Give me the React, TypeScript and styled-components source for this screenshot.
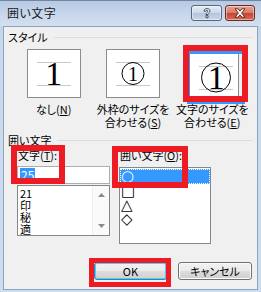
import React from "react";
import styled, { createGlobalStyle } from "styled-components";

const Global = createGlobalStyle`
  html, body { margin: 0; padding: 0; background: #ffffff; }
  body {
    font-family: "Noto Sans CJK JP", "Noto Sans", sans-serif;
    font-size: 11px;
    font-feature-settings: "palt";
  }
  * { box-sizing: border-box; }
`;

const Window = styled.div`
  position: relative;
  width: 261px;
  height: 292px;
  display: flex;
  flex-direction: column;
  background: linear-gradient(#bccde3, #c9d8ec 40px, #cddcee);
  border-top: 1px solid #6f86a5;
  overflow: hidden;
`;

const TitleBar = styled.div`
  height: 25px;
  display: flex;
  align-items: flex-start;
  padding: 4px 6px 0 7px;
  background: linear-gradient(#b7c9e2, #c6d6eb 12px, #d3e0f0);
`;

const Title = styled.div`
  flex: 1;
  line-height: 16px;
  font-size: 12px;
  color: #1a1a1a;
  letter-spacing: 0.5px;
`;

const CaptionButton = styled.div<{ $kind: "help" | "close" }>`
  height: 16px;
  width: ${(p) => (p.$kind === "help" ? 31 : 30)}px;
  margin-left: ${(p) => (p.$kind === "help" ? 0 : 3)}px;
  border: 1px solid ${(p) => (p.$kind === "help" ? "#55667f" : "#6e2a22")};
  border-radius: 3px;
  display: flex;
  align-items: center;
  justify-content: center;
  background: ${(p) =>
    p.$kind === "help"
      ? "linear-gradient(#e4ecf6, #cbd8e8 50%, #b3c4da 51%, #c9d7e9)"
      : "linear-gradient(#e7a394, #d57968 50%, #c4452f 51%, #d26b55)"};
  box-shadow: inset 0 0 0 1px rgba(255, 255, 255, 0.45);
`;

const Client = styled.div`
  flex: 1;
  margin: 0 3px 2px 3px;
  border: 1px solid #8ea3bd;
  background: #f0f0f0;
  display: flex;
  flex-direction: column;
  padding: 0 5px 9px 4px;
`;

const GroupHeader = styled.div<{ $top: number }>`
  display: flex;
  align-items: center;
  margin-top: ${(p) => p.$top}px;
  height: 12px;
  line-height: 12px;
  color: #000;
`;

const GroupLine = styled.div`
  flex: 1;
  height: 1px;
  margin-left: 6px;
  background: #d5dfe5;
`;

const StyleRow = styled.div`
  display: flex;
  align-items: flex-start;
  padding-left: 6px;
  margin-top: 6px;
`;

const StyleOption = styled.div`
  width: 80px;
  display: flex;
  flex-direction: column;
  align-items: center;
`;

const PreviewBox = styled.div<{ $selected?: boolean }>`
  width: 54px;
  height: 49px;
  border: 1px solid #8c8c8c;
  background: #fff;
  display: grid;
  place-items: center;
  padding: ${(p) => (p.$selected ? "1px" : "0")};
`;

const PreviewInner = styled.div<{ $selected?: boolean }>`
  grid-area: 1 / 1;
  width: 100%;
  height: 100%;
  display: grid;
  place-items: center;
  border: ${(p) => (p.$selected ? "3px solid #3399ff" : "0")};
`;

const Layer = styled.div`
  grid-area: 1 / 1;
  display: grid;
  place-items: center;
`;

const Digit = styled.span<{ $size: number }>`
  grid-area: 1 / 1;
  font-family: "Liberation Serif", "Times New Roman", serif;
  font-size: ${(p) => p.$size}px;
  line-height: 1;
  color: #000;
`;

const OptionLabel = styled.div`
  margin-top: 5px;
  text-align: center;
  line-height: 13px;
  white-space: nowrap;
  color: #000;
`;

const Key = styled.span`
  text-decoration: underline;
`;

const Columns = styled.div`
  display: flex;
  align-items: flex-start;
  gap: 9px;
  margin-top: 3px;
`;

const LeftCol = styled.div`
  width: 102px;
  padding-left: 9px;
  display: flex;
  flex-direction: column;
`;

const RightCol = styled.div`
  width: 92px;
  display: flex;
  flex-direction: column;
`;

const FieldLabel = styled.div`
  line-height: 13px;
  height: 13px;
  padding-left: 1px;
  white-space: nowrap;
  color: #000;
`;

const TextInput = styled.div`
  margin-top: 4px;
  height: 18px;
  border: 1px solid #abadb3;
  background: #fff;
  display: flex;
  align-items: center;
  padding-left: 2px;
`;

const Selected = styled.span`
  background: #3399ff;
  color: #fff;
  line-height: 14px;
  padding: 0 1px;
  font-size: 12px;
`;

const ListBox = styled.div<{ $height: number; $top: number }>`
  margin-top: ${(p) => p.$top}px;
  height: ${(p) => p.$height}px;
  border: 1px solid #828790;
  background: #fff;
  display: flex;
`;

const ListItems = styled.div`
  flex: 1;
  display: flex;
  flex-direction: column;
  padding-top: 1px;
`;

const ListItem = styled.div<{ $selected?: boolean; $h: number; $size: number; $symbol?: boolean }>`
  height: ${(p) => p.$h}px;
  line-height: ${(p) => p.$h}px;
  padding-left: ${(p) => (p.$symbol ? 1 : 2)}px;
  color: ${(p) => (p.$selected ? "#fff" : "#000")};
  background: ${(p) => (p.$selected ? "#3399ff" : "transparent")};
  outline: ${(p) => (p.$selected ? "1px dotted #fff" : "none")};
  outline-offset: -1px;
  font-size: ${(p) => p.$size}px;
  font-family: ${(p) =>
    p.$symbol ? '"DejaVu Sans", sans-serif' : '"Noto Sans CJK JP", sans-serif'};
  font-feature-settings: normal;
`;

const ScrollBar = styled.div`
  width: 17px;
  border-left: 1px solid #f0f0f0;
  background: #fafafa;
  display: flex;
  flex-direction: column;
  justify-content: space-between;
  align-items: center;
  padding: 7px 0 7px;
`;

const ButtonRow = styled.div`
  margin-top: auto;
  display: flex;
  justify-content: flex-end;
  gap: 11px;
`;

const Button = styled.div<{ $default?: boolean }>`
  width: ${(p) => (p.$default ? 73 : 74)}px;
  height: 18px;
  border: 1px solid ${(p) => (p.$default ? "#3c7fb1" : "#707070")};
  border-radius: 3px;
  background: linear-gradient(#f2f2f2, #ebebeb 50%, #dddddd 51%, #cfcfcf);
  box-shadow: inset 0 0 0 1px ${(p) => (p.$default ? "#48d1ff" : "#fcfcfc")};
  display: flex;
  align-items: center;
  justify-content: center;
  color: #000;
  line-height: 14px;
`;

const Mark = styled.div<{ $x: number; $y: number; $w: number; $h: number; $t: number }>`
  position: absolute;
  left: ${(p) => p.$x}px;
  top: ${(p) => p.$y}px;
  width: ${(p) => p.$w}px;
  height: ${(p) => p.$h}px;
  border: ${(p) => p.$t}px solid #ed1c24;
  pointer-events: none;
`;

const Guides = ({ r }: { r?: number }) => (
  <Layer>
    <svg width="52" height="47" viewBox="0 0 52 47">
      <line x1="9" y1="12.5" x2="43" y2="12.5" stroke="#c8c8c8" />
      <line x1="9" y1="35.5" x2="43" y2="35.5" stroke="#c8c8c8" />
      {r ? <circle cx="26" cy="23.5" r={r} fill="none" stroke="#000" strokeWidth="1" /> : null}
    </svg>
  </Layer>
);

const Arrow = ({ up }: { up?: boolean }) => (
  <svg width="7" height="4" viewBox="0 0 7 4">
    <path d={up ? "M0 4 L3.5 0 L7 4 Z" : "M0 0 L3.5 4 L7 0 Z"} fill="#8a8a8a" />
  </svg>
);

export default function App() {
  return (
    <>
      <Global />
      <Window>
        <TitleBar>
          <Title>囲い文字</Title>
          <CaptionButton $kind="help">
            <svg width="10" height="11" viewBox="0 0 10 11">
              <path
                d="M2 3.2 C2 1.2 3.5 0.6 5 0.6 C6.8 0.6 8 1.6 8 3 C8 4.6 6 5 6 6.5 L4 6.5 C4 4.6 6 4.3 6 3.1 C6 2.5 5.6 2.2 5 2.2 C4.3 2.2 4 2.6 4 3.2 Z M4 7.6 L6 7.6 L6 9.8 L4 9.8 Z"
                fill="#fff"
                stroke="#33455f"
                strokeWidth="0.9"
              />
            </svg>
          </CaptionButton>
          <CaptionButton $kind="close">
            <svg width="12" height="10" viewBox="0 0 12 10">
              <path
                d="M1 0.8 L4 0.8 L6 3.2 L8 0.8 L11 0.8 L7.6 5 L11 9.2 L8 9.2 L6 6.8 L4 9.2 L1 9.2 L4.4 5 Z"
                fill="#fff"
                stroke="#5a1d14"
                strokeWidth="0.9"
              />
            </svg>
          </CaptionButton>
        </TitleBar>
        <Client>
          <GroupHeader $top={4}>
            スタイル
            <GroupLine />
          </GroupHeader>
          <StyleRow>
            <StyleOption>
              <PreviewBox>
                <Guides />
                <Digit $size={34}>1</Digit>
              </PreviewBox>
              <OptionLabel>
                なし(<Key>N</Key>)
              </OptionLabel>
            </StyleOption>
            <StyleOption>
              <PreviewBox>
                <Guides r={11} />
                <Digit $size={20}>1</Digit>
              </PreviewBox>
              <OptionLabel>
                外枠のサイズを
                <br />
                合わせる(<Key>S</Key>)
              </OptionLabel>
            </StyleOption>
            <StyleOption>
              <PreviewBox $selected>
                <PreviewInner $selected>
                  <Guides r={14.5} />
                  <Digit $size={34}>1</Digit>
                </PreviewInner>
              </PreviewBox>
              <OptionLabel>
                文字のサイズを
                <br />
                合わせる(<Key>E</Key>)
              </OptionLabel>
            </StyleOption>
          </StyleRow>
          <GroupHeader $top={5}>
            囲い文字
            <GroupLine />
          </GroupHeader>
          <Columns>
            <LeftCol>
              <FieldLabel>
                文字(<Key>T</Key>):
              </FieldLabel>
              <TextInput>
                <Selected>25</Selected>
              </TextInput>
              <ListBox $height={51} $top={1}>
                <ListItems>
                  <ListItem $h={12} $size={11}>21</ListItem>
                  <ListItem $h={12} $size={11}>印</ListItem>
                  <ListItem $h={12} $size={11}>秘</ListItem>
                  <ListItem $h={12} $size={11}>適</ListItem>
                </ListItems>
                <ScrollBar>
                  <Arrow up />
                  <Arrow />
                </ScrollBar>
              </ListBox>
            </LeftCol>
            <RightCol>
              <FieldLabel>
                囲い文字(<Key>O</Key>):
              </FieldLabel>
              <ListBox $height={77} $top={5}>
                <ListItems>
                  <ListItem $h={15} $size={15} $symbol $selected>○</ListItem>
                  <ListItem $h={14} $size={15} $symbol>□</ListItem>
                  <ListItem $h={14} $size={15} $symbol>△</ListItem>
                  <ListItem $h={14} $size={15} $symbol>◇</ListItem>
                </ListItems>
              </ListBox>
            </RightCol>
          </Columns>
          <ButtonRow>
            <Button $default>OK</Button>
            <Button>キャンセル</Button>
          </ButtonRow>
        </Client>
        <Mark $x={183} $y={44} $w={65} $h={57} $t={6} />
        <Mark $x={11} $y={144} $w={54} $h={39} $t={6} />
        <Mark $x={112} $y={145} $w={76} $h={42} $t={6} />
        <Mark $x={89} $y={257} $w={82} $h={29} $t={5} />
      </Window>
    </>
  );
}
